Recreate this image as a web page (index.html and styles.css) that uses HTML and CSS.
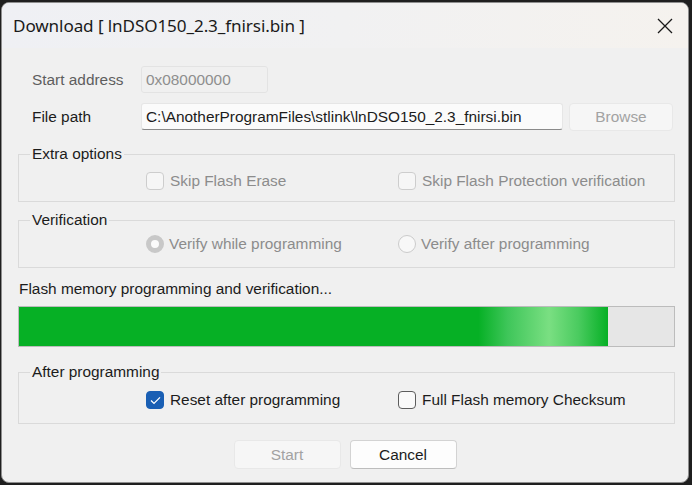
FILE: index.html
```html
<!DOCTYPE html>
<html>
<head>
<meta charset="utf-8">
<link rel="stylesheet" href="styles.css">
</head>
<body>
<div class="window">
  <div class="titlebar">
    <span class="title">Download [ lnDSO150_2.3_fnirsi.bin ]</span>
    <svg class="close" width="16" height="16" viewBox="0 0 16 16"><path d="M1 1 L15 15 M15 1 L1 15" stroke="#1a1a1a" stroke-width="1.3" fill="none"/></svg>
  </div>
  <div class="content">
    <div class="row row-addr">
      <span class="lbl lbl-dim">Start address</span>
      <div class="edit edit-disabled">0x08000000</div>
    </div>
    <div class="row row-path">
      <span class="lbl">File path</span>
      <div class="edit edit-path">C:\AnotherProgramFiles\stlink\lnDSO150_2.3_fnirsi.bin</div>
      <div class="btn btn-disabled btn-browse">Browse</div>
    </div>

    <fieldset class="group g1">
      <legend>Extra options</legend>
      <div class="opts">
        <label class="opt dis"><span class="cb cb-dis"></span>Skip Flash Erase</label>
        <label class="opt dis"><span class="cb cb-dis"></span>Skip Flash Protection verification</label>
      </div>
    </fieldset>

    <fieldset class="group g2">
      <legend>Verification</legend>
      <div class="opts">
        <label class="opt dis rad"><span class="rb rb-on"></span>Verify while programming</label>
        <label class="opt dis rad"><span class="rb"></span>Verify after programming</label>
      </div>
    </fieldset>

    <div class="status">Flash memory programming and verification...</div>
    <div class="progress"><div class="fill" style="width: 589px"></div></div>

    <fieldset class="group g3">
      <legend>After programming</legend>
      <div class="opts">
        <label class="opt"><span class="cb cb-on"><svg width="11" height="9" viewBox="0 0 11 9"><path d="M1 4.6 L4 7.4 L10 1.4" stroke="#fff" stroke-width="1.3" fill="none"/></svg></span>Reset after programming</label>
        <label class="opt"><span class="cb cb-off"></span>Full Flash memory Checksum</label>
      </div>
    </fieldset>

    <div class="buttons">
      <div class="btn btn-disabled btn-dlg">Start</div>
      <div class="btn btn-dlg btn-cancel">Cancel</div>
    </div>
  </div>
</div>
</body>
</html>
```
FILE: styles.css
```css
html, body {
  margin: 0;
  padding: 0;
  background: #1f1f1f;
  width: 692px;
  height: 485px;
  overflow: hidden;
}
.window {
  box-sizing: border-box;
  margin: 2px 0 0 1px;
  width: 688px;
  height: 481px;
  border: 1px solid #8e8e8e;
  border-radius: 8px;
  overflow: hidden;
  background: #f0f0f0;
  font-family: "Liberation Sans", Arial, sans-serif;
  font-size: 15.4px;
  color: #1c1c1c;
}
.titlebar {
  height: 45px;
  display: flex;
  align-items: center;
  justify-content: space-between;
  padding: 0 15px 0 11px;
  background: linear-gradient(90deg, #eff0f4 0%, #f1f1f2 50%, #f5f2ee 100%);
}
.title {
  font-family: "Noto Sans", "Open Sans", sans-serif;
  font-size: 17.1px;
  color: #1a1a1a;
  letter-spacing: -0.1px;
}
.close { display: block; margin-top: 1px; }
.content {
  padding: 0 13px 0 16px;
}
.row {
  display: flex;
  align-items: center;
}
.row-addr { margin-top: 18px; height: 27px; }
.row-path { margin-top: 9px; height: 29px; }
.lbl {
  width: 109px;
  padding-left: 14px;
  flex: none;
}
.lbl-dim { color: #5e5e5e; }
.edit {
  box-sizing: border-box;
  height: 27px;
  display: flex;
  align-items: center;
  padding-left: 4px;
  white-space: nowrap;
}
.edit-disabled {
  width: 127px;
  background: #f0f0f0;
  border: 1px solid #e3e3e3;
  border-radius: 3px;
  color: #8e8e8e;
}
.edit-path {
  width: 422px;
  background: #fbfbfb;
  border: 1px solid #e6e6e6;
  border-bottom: 1px solid #8a8a8a;
  border-radius: 3px;
  color: #1c1c1c;
}
.btn {
  box-sizing: border-box;
  display: flex;
  align-items: center;
  justify-content: center;
  border-radius: 4px;
}
.btn-disabled {
  background: #f6f6f6;
  border: 1px solid #e8e8e8;
  color: #a2a2a2;
}
.btn-browse {
  width: 104px;
  height: 28px;
  margin-left: 6px;
}
.group {
  margin: 0;
  padding: 0;
  border: 1px solid #dadada;
  border-radius: 0;
  min-width: 0;
}
.group legend {
  margin-left: 11px;
  padding: 0 2px;
  line-height: 18px;
  color: #1c1c1c;
}
.g1 { margin-top: 14px; }
.g1 .opts { padding: 8px 0 10px; }
.g2 { margin-top: 9px; }
.g2 .opts { padding: 5px 0 13px; }
.g3 { margin-top: 16px; }
.g3 .opts { padding: 9px 0 13px; }
.opts {
  display: grid;
  grid-template-columns: 252px 1fr;
  padding-left: 127px !important;
}
.opt {
  display: flex;
  align-items: center;
  height: 20px;
  white-space: nowrap;
}
.opt.dis { color: #8c8c8c; }
.cb {
  box-sizing: border-box;
  width: 18px;
  height: 18px;
  border-radius: 4px;
  margin-right: 6px;
  flex: none;
  display: flex;
  align-items: center;
  justify-content: center;
}
.cb-dis { background: #f6f6f6; border: 1px solid #cdcdcd; }
.cb-off { background: #f9f9f9; border: 1px solid #5c5c5c; }
.cb-on { background: #1a5fb4; border: 1px solid #1a5fb4; }
.rb {
  box-sizing: border-box;
  width: 18px;
  height: 18px;
  border-radius: 50%;
  margin-right: 5px;
  flex: none;
  background: #f8f8f8;
  border: 1px solid #cbcbcb;
}
.rb-on {
  background: #fbfbfb;
  border: 5px solid #c8c8c8;
}
.status {
  margin-top: 12px;
  line-height: 18px;
  padding-left: 1px;
}
.progress {
  box-sizing: border-box;
  margin-top: 8px;
  height: 41px;
  border: 1px solid #bcbcbc;
  background: #e6e6e6;
}
.fill {
  height: 100%;
  background: linear-gradient(90deg, #06b025 0%, #06b025 78%, #3fc65a 83%, #7adf82 90%, #4acb5f 95%, #06b025 100%);
}
.buttons {
  display: flex;
  justify-content: center;
  gap: 9px;
  margin-top: 16px;
  padding-right: 0;
  margin-left: -3px;
}
.btn-dlg {
  width: 107px;
  height: 29px;
}
.btn-cancel {
  background: #fdfdfd;
  border: 1px solid #d3d3d3;
  border-bottom-color: #bdbdbd;
  color: #1c1c1c;
}
```
